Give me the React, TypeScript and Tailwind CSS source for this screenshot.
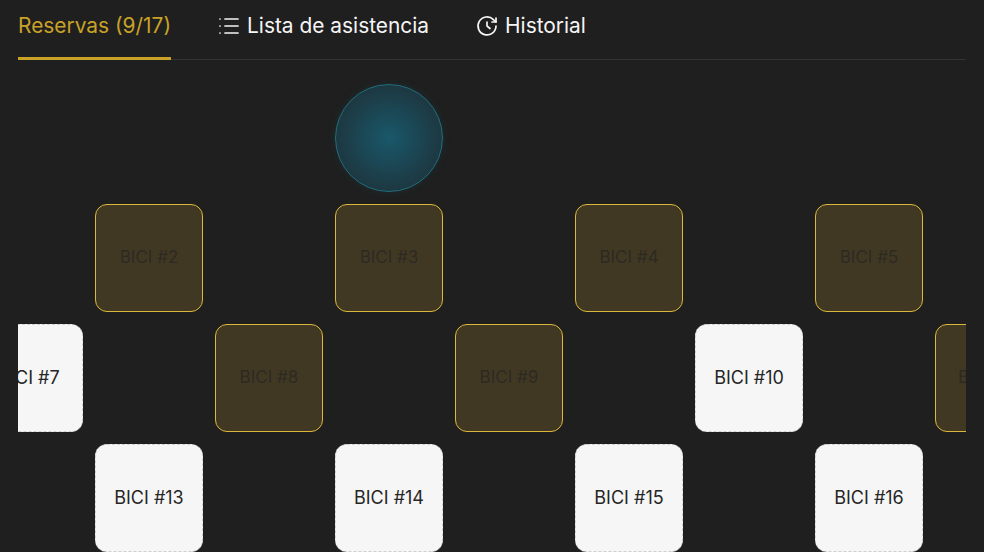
import React from "react";

function ListIcon() {
  return (
    <svg width="24" height="24" viewBox="0 0 24 24" fill="none" stroke="currentColor" strokeWidth="1.7" strokeLinecap="round" strokeLinejoin="round">
      <path d="M3 5h.01M3 12h.01M3 19h.01M8 5h13M8 12h13M8 19h13" />
    </svg>
  );
}

function ClockIcon() {
  return (
    <svg width="24" height="24" viewBox="0 0 24 24" fill="none" stroke="currentColor" strokeWidth="1.7" strokeLinecap="round" strokeLinejoin="round">
      <path d="M21 12a9 9 0 1 1-2.6-6.4L21 8" />
      <path d="M21 4v4h-4" />
      <path d="M12 8v4l3 2.5" />
    </svg>
  );
}

function Reserved({ n }: { n: number }) {
  return (
    <div className="w-[108px] h-[108px] shrink-0 rounded-xl border border-[#dcb83a] bg-[#413823] flex items-center justify-center text-[17px] text-[#2c2a22]">
      <span className="whitespace-nowrap">BICI #{n}</span>
    </div>
  );
}

function Free({ n }: { n: number }) {
  return (
    <div className="w-[108px] h-[108px] shrink-0 rounded-xl border border-dashed border-[#cfcfcf] bg-[#f6f6f6] flex items-center justify-center pb-[1px] text-[18px] text-[#262626]">
      <span className="whitespace-nowrap">BICI #{n}</span>
    </div>
  );
}

export default function App() {
  return (
    <div className="w-[984px] h-[552px] overflow-hidden bg-[#1f1f1f] px-[18px] font-['Inter',sans-serif]">
      <div className="flex h-[60px] gap-[46px] border-b border-[#333333] text-[20.9px] text-[#f5f5f5]">
        <div className="h-[60px] flex items-center pb-[5px] border-b-[3px] border-[#c9a227] text-[#c9a227] whitespace-nowrap">Reservas (9/17)</div>
        <div className="h-[60px] flex items-center pb-[8px] gap-1.5 whitespace-nowrap"><ListIcon />Lista de asistencia</div>
        <div className="h-[60px] flex items-center pb-[8px] gap-1.5 whitespace-nowrap"><ClockIcon />Historial</div>
      </div>
      <div className="overflow-hidden flex flex-col gap-3 pt-6">
        <div className="flex pl-[317px]">
          <div className="w-[108px] h-[108px] rounded-full border border-[#1f6f7f] bg-[radial-gradient(circle,#19586a_0%,#1c414d_50%,#1f2b30_100%)] shadow-[0_0_8px_rgba(30,110,130,0.15)]" />
        </div>
        <div className="flex gap-[132px] pl-[77px]">
          <Reserved n={2} /><Reserved n={3} /><Reserved n={4} /><Reserved n={5} />
        </div>
        <div className="flex gap-[132px] ml-[-43px]">
          <Free n={7} /><Reserved n={8} /><Reserved n={9} /><Free n={10} /><Reserved n={11} />
        </div>
        <div className="flex gap-[132px] pl-[77px]">
          <Free n={13} /><Free n={14} /><Free n={15} /><Free n={16} />
        </div>
      </div>
    </div>
  );
}
